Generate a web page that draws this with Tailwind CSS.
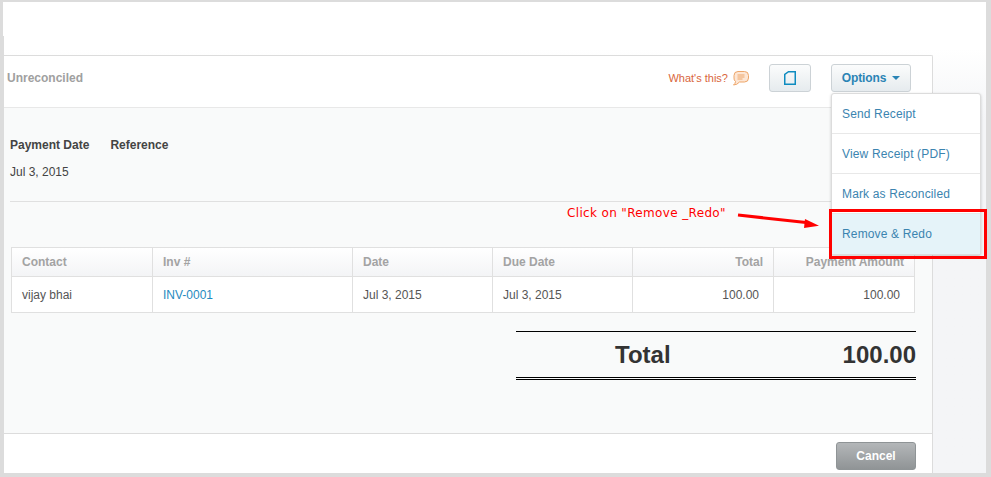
<!DOCTYPE html>
<html lang="en">
<head>
    <meta charset="utf-8" />
    <title>Payment</title>
    <script src="https://cdn.jsdelivr.net/npm/@tailwindcss/browser@4"></script>
</head>
<body class="w-[991px] h-[477px] overflow-hidden bg-[#dcdcdc] font-['Liberation_Sans',Arial,sans-serif] text-[12px] text-[#444]">
    <div class="relative w-[991px] h-[477px] pt-[2px] pr-[5px] pb-[4px] pl-[3px]">
        <div class="h-[471px] bg-gradient-to-b from-white from-[10%] to-[#f4f5f7] to-[25%] flex flex-col">
            <!-- top strip -->
            <div class="h-[53px] shrink-0"></div>
            <!-- card -->
            <div class="w-[929px] h-[418px] ml-[1px] border-t border-r border-[#dcdcdc] rounded-tr-[2px] bg-white flex flex-col">
                <div class="h-[52px] flex items-center shrink-0 border-b border-[#e8e8e8] pl-[3px] pb-[7px]">
                    <span class="font-bold text-[#a0a0a0]">Unreconciled</span>
                    <span class="ml-auto text-[11px] text-[#d9663c]">What's this?</span>
                    <svg class="ml-[5px]" width="16" height="15" viewBox="0 0 16 15" fill="#fde6d4" stroke="#eda66a" stroke-width="1">
                        <path d="M5 .5h6.500a4 4 0 0 1 4 4v2.500a4 4 0 0 1-4 4H6.500Q4 14 .5 14q2-1.500 2-3.500A4 4 0 0 1 1 7V4.500a4 4 0 0 1 4-4z" />
                        <path d="M4.500 4h7M4.500 6h7M4.500 8h5" fill="none" />
                    </svg>
                    <button class="ml-[20px] w-[42px] h-[28px] flex items-center justify-center rounded-[3px] border border-[#ccd2d6] bg-gradient-to-b from-[#fbfcfc] to-[#e6ebee]">
                        <svg width="12" height="14" viewBox="0 0 12 14" fill="none" stroke="#0f8cc0" stroke-width="1.500">
                            <path d="M.750 13.250V3.500L4.500 .750h6.750v12.500z" />
                        </svg>
                    </button>
                    <button class="ml-[20px] mr-[21px] w-[80px] h-[28px] flex items-center justify-center rounded-[3px] border border-[#ccd2d6] bg-gradient-to-b from-[#fbfcfc] to-[#e6ebee] font-bold tracking-[-0.1px] text-[#2a84b5]">
                        Options
                        <span class="ml-[6px] w-0 h-0 border-x-[4px] border-x-transparent border-t-[4px] border-t-[#2a84b5]"></span>
                    </button>
                </div>
                <!-- body -->
                <div class="flex-1 bg-[#f9fafa] pl-[6px] pr-[16px] flex flex-col">
                    <div class="flex gap-[21px] mt-[28px] font-bold text-[#444]">
                        <span>Payment Date</span>
                        <span>Reference</span>
                    </div>
                    <div class="mt-[9px] text-[#444]">Jul 3, 2015</div>
                    <div class="mt-[20px] border-t border-[#e0e0e0]"></div>
                    <table class="mt-[45px] ml-[1px] w-[904px] table-fixed border-collapse bg-white">
                        <thead>
                            <tr class="h-[29px] bg-gradient-to-b from-white to-[#f3f4f6] font-bold text-[#a3a3a3]">
                                <th class="w-[141px] border border-[#e0e0e0] pl-[10px] text-left">Contact</th>
                                <th class="w-[200px] border border-[#e0e0e0] pl-[10px] text-left">Inv #</th>
                                <th class="w-[140px] border border-[#e0e0e0] pl-[10px] text-left">Date</th>
                                <th class="w-[140px] border border-[#e0e0e0] pl-[10px] text-left">Due Date</th>
                                <th class="w-[141px] border border-[#e0e0e0] pr-[10px] text-right">Total</th>
                                <th class="border border-[#e0e0e0] pr-[10px] text-right">Payment Amount</th>
                            </tr>
                        </thead>
                        <tbody>
                            <tr class="h-[36px] text-[#555]">
                                <td class="border border-[#e0e0e0] pl-[10px]">vijay bhai</td>
                                <td class="border border-[#e0e0e0] pl-[10px] text-[#1f8ac0]">INV-0001</td>
                                <td class="border border-[#e0e0e0] pl-[10px]">Jul 3, 2015</td>
                                <td class="border border-[#e0e0e0] pl-[10px]">Jul 3, 2015</td>
                                <td class="border border-[#e0e0e0] pr-[14px] text-right">100.00</td>
                                <td class="border border-[#e0e0e0] pr-[14px] text-right">100.00</td>
                            </tr>
                        </tbody>
                    </table>
                    <div class="mt-[18px] ml-auto w-[400px] h-[49px] border-t border-b-[3px] border-t-black border-b-black border-double flex items-center justify-between font-bold text-[24px] text-[#333]">
                        <span class="ml-[99px]">Total</span>
                        <span>100.00</span>
                    </div>
                </div>
                <div class="h-[40px] shrink-0 border-t border-[#dcdcdc] flex items-start justify-end pt-[8px] pr-[16px]">
                    <button class="w-[80px] h-[28px] rounded-[3px] border border-[#8f9496] bg-gradient-to-b from-[#b4b7b9] to-[#909496] font-bold text-white">Cancel</button>
                </div>
            </div>
        </div>

        <!-- notch at the left edge of the window -->
        <div class="absolute left-[3px] top-[36px] w-[1px] h-[437px] bg-[#dcdcdc]"></div>

        <!-- options menu -->
        <ul class="absolute left-[831px] top-[93px] w-[150px] rounded-[3px] border border-[#dcdcdc] bg-white shadow-[0_1px_3px_rgba(0,0,0,0.2)] tracking-[0.15px] text-[#3b84b0]">
            <li class="h-[40px] flex items-center pl-[10px] border-b border-[#e8e8e8]">Send Receipt</li>
            <li class="h-[40px] flex items-center pl-[10px] border-b border-[#e8e8e8]">View Receipt (PDF)</li>
            <li class="h-[40px] flex items-center pl-[10px] border-b border-[#e8e8e8]">Mark as Reconciled</li>
            <li class="h-[40px] flex items-center pl-[10px] bg-[#e5f3f9]">Remove &amp; Redo</li>
        </ul>

        <!-- annotation -->
        <div class="absolute left-[829px] top-[209px] w-[158px] h-[50px] border-[3px] border-[#ff0000]"></div>
        <span class="absolute left-[567px] top-[204px] font-['DejaVu_Sans',sans-serif] text-[12px] tracking-[0.35px] text-[#ff0000]">Click on "Remove _Redo"</span>
        <svg class="absolute left-[736px] top-[210px]" width="86" height="20" viewBox="0 0 86 20">
            <path d="M2 5l68 7.500" stroke="#ff0000" stroke-width="3" fill="none" />
            <path d="M83 15.700L69 9l-1 9z" fill="#ff0000" />
        </svg>
    </div>
</body>
</html>
